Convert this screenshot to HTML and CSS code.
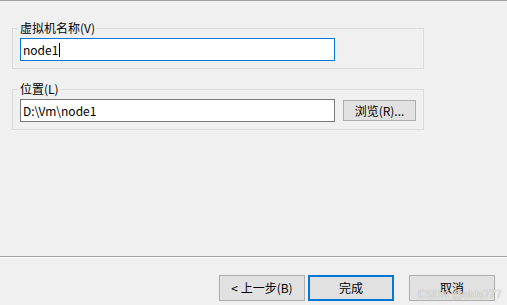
FILE: index.html
```html
<!DOCTYPE html>
<html lang="zh-CN">
<head>
  <meta charset="UTF-8" />
  <title>新建虚拟机向导</title>
  <link rel="stylesheet" href="styles.css">
</head>
<body>
  <div class="wizard">
    <div class="main">
      <fieldset class="group">
        <legend>虚拟机名称(V)</legend>
        <div class="textbox focused">node1<span class="caret"></span></div>
      </fieldset>

      <fieldset class="group group-location">
        <legend>位置(L)</legend>
        <div class="row">
          <div class="textbox">D:\Vm\node1</div>
          <button class="btn btn-small">浏览(R)...</button>
        </div>
      </fieldset>
    </div>

    <div class="footer">
      <button class="btn">&lt; 上一步(B)</button>
      <button class="btn btn-default">完成</button>
      <button class="btn btn-cancel">取消</button>
    </div>
  </div>

  <div class="watermark">CSDN @sido777</div>
</body>
</html>
```

FILE: styles.css
```css
body {
  margin: 0;
  background: #f0f0f0;
  border-top: 1px solid #a0a0a0;
  font-family: "Noto Sans CJK SC", "Noto Sans", sans-serif;
  font-size: 12px;
  color: #000;
  position: relative;
  overflow: hidden;
}
.wizard {
  display: flex;
  flex-direction: column;
  height: 304px;
}
.main {
  flex: 1;
  padding: 20px 0 0 12px;
}
.group {
  margin: 0;
  width: 412px;
  box-sizing: border-box;
  border: 1px solid #dcdcdc;
  padding: 3px 7px 7px 7px;
}
.group legend {
  padding: 0 1px;
  margin-left: -1px;
  line-height: 14px;
}
.group-location {
  margin-top: 13px;
}
.row {
  display: flex;
  gap: 8px;
  align-items: flex-start;
}
.textbox {
  width: 315px;
  height: 23px;
  box-sizing: border-box;
  background: #fff;
  border: 1px solid #7a7a7a;
  padding: 0 2px;
  line-height: 21px;
  white-space: nowrap;
}
.textbox.focused {
  border-color: #0078d7;
}
.caret {
  display: inline-block;
  width: 1px;
  height: 14px;
  background: #000;
  vertical-align: -2px;
  margin-left: 1px;
}
.btn {
  font-family: inherit;
  font-size: 12px;
  color: #000;
  background: #e1e1e1;
  border: 1px solid #adadad;
  width: 86px;
  height: 26px;
  padding: 0;
  margin: 0;
  line-height: 24px;
}
.btn-small {
  width: 73px;
  height: 21px;
  line-height: 19px;
  margin-top: 1px;
}
.btn-default {
  border: 2px solid #0078d7;
  line-height: 22px;
  margin-left: 3px;
}
.btn-cancel {
  margin-left: 15px;
}
.footer {
  height: 49px;
  box-sizing: border-box;
  border-top: 1px solid #a0a0a0;
  box-shadow: inset 0 1px #fff;
  padding: 18px 12px 0 0;
  display: flex;
  justify-content: flex-end;
}
.watermark {
  position: absolute;
  right: 5px;
  bottom: 5px;
  font-family: "Liberation Sans", sans-serif;
  font-size: 11px;
  color: rgba(255, 255, 255, 0.75);
  text-shadow: 0 0 1px #8a8a8a;
}
```
